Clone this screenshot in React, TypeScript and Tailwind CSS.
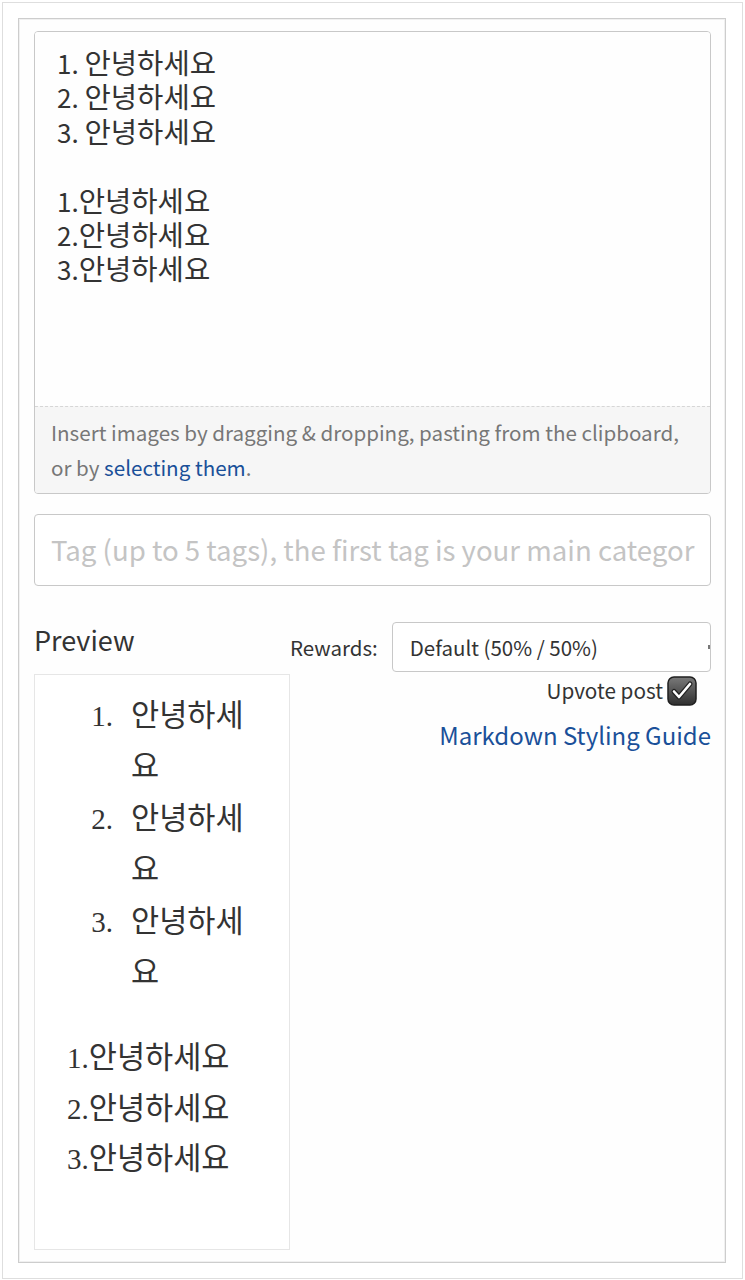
const sans = { fontFamily: '"Noto Sans CJK KR", "Noto Sans", sans-serif' };
const serif = { fontFamily: '"Liberation Serif", "Noto Sans CJK KR", serif' };

const editorLines: [string, string][] = [
  ["1. ", "안녕하세요"],
  ["2. ", "안녕하세요"],
  ["3. ", "안녕하세요"],
  ["", ""],
  ["1.", "안녕하세요"],
  ["2.", "안녕하세요"],
  ["3.", "안녕하세요"],
];

function CheckBox() {
  return (
    <svg width="30" height="30" viewBox="0 0 30 30">
      <defs>
        <linearGradient id="cb" x1="0" y1="0" x2="0" y2="1">
          <stop offset="0" stopColor="#7a7a7a" />
          <stop offset="1" stopColor="#2f2f2f" />
        </linearGradient>
      </defs>
      <rect x="1" y="1" width="28" height="28" rx="6" fill="url(#cb)" stroke="#1f1f1f" strokeWidth="1.5" />
      <path d="M7 15.5l5 5.5L23 8" fill="none" stroke="#222" strokeWidth="5" strokeLinecap="round" strokeLinejoin="round" />
      <path d="M7 15.5l5 5.5L23 8" fill="none" stroke="#fff" strokeWidth="2.6" strokeLinecap="round" strokeLinejoin="round" />
    </svg>
  );
}

export default function App() {
  return (
    <div className="bg-white p-[2px] text-[#333]" style={sans}>
      <div className="h-[1277px] border border-[#dedede] pl-[15px] pr-[16px] py-[15px]">
        <div className="h-full border border-[#cdcdcd] bg-[#fefefe] pt-[12px] pl-[15px] pr-[14px] pb-[12px] shadow-[inset_0_0_0_1px_#f0f0f0]">
          {/* editor */}
          <div className="rounded-[4px] border border-[#c8c8c8] overflow-hidden">
            <div className="h-[374px] bg-[#fefefe] pt-[13px] pl-[22px] text-[26px] leading-[34.4px] text-[#333]">
              {editorLines.map(([num, word], i) => (
                <div key={i} className="h-[34.4px] whitespace-pre">
                  {num}
                  <span className="text-[28.6px]">{word}</span>
                </div>
              ))}
            </div>
            <div className="border-t border-dashed border-[#d6d6d6] bg-[#f6f6f6] px-[16px] pt-[8px] pb-[8px] text-[20.6px] leading-[35px] text-[#777]">
              Insert images by dragging &amp; dropping, pasting from the clipboard, or by{" "}
              <span className="text-[#1a5099]">selecting them</span>.
            </div>
          </div>

          {/* tags */}
          <div className="mt-[20px] h-[72px] rounded-[4px] border border-[#c8c8c8] bg-white pl-[16px] pr-[15px] flex items-center overflow-hidden">
            <div className="whitespace-nowrap overflow-hidden text-[27.6px] text-[#c4c4c4]">
              Tag (up to 5 tags), the first tag is your main category.
            </div>
          </div>

          {/* bottom row */}
          <div className="mt-[36px] flex">
            <div className="w-[256px] shrink-0">
              <div className="h-[52px] text-[27px] leading-[36px]">Preview</div>
              <div className="h-[576px] border border-[#e6e6e6] bg-white pt-[16px] pl-[32px] pr-[32px] text-[29px] text-[#333]" style={serif}>
                {[1, 2, 3].map((n) => (
                  <div key={n} className="flex leading-[51px] mb-[1px]">
                    <span className="w-[64px] shrink-0 text-right pr-[18px]">{n}.</span>
                    <span className="min-w-0 break-all text-[30.6px]">안녕하세요</span>
                  </div>
                ))}
                <div className="mt-[34px] leading-[50.5px]">
                  <div>1.<span className="text-[30.6px]">안녕하세요</span></div>
                  <div>2.<span className="text-[30.6px]">안녕하세요</span></div>
                  <div>3.<span className="text-[30.6px]">안녕하세요</span></div>
                </div>
              </div>
            </div>
            <div className="flex-1 flex flex-col items-end">
              <div className="flex items-center w-full">
                <span className="text-[20.5px] mr-[14px] whitespace-nowrap">Rewards:</span>
                <div className="relative flex-1 h-[50px] rounded-[4px] border border-[#c8c8c8] bg-white flex items-center pl-[17px] text-[20.5px]">
                  Default (50% / 50%)
                  <span className="absolute right-0 top-[22px] w-[2px] h-[4px] bg-[#777]" />
                </div>
              </div>
              <div className="mt-[3px] flex items-center gap-[4px] pr-[14px]">
                <span className="text-[20.7px]">Upvote post</span>
                <CheckBox />
              </div>
              <div className="mt-[11px] text-[24px] text-[#1a5099]">Markdown Styling Guide</div>
            </div>
          </div>
        </div>
      </div>
    </div>
  );
}
